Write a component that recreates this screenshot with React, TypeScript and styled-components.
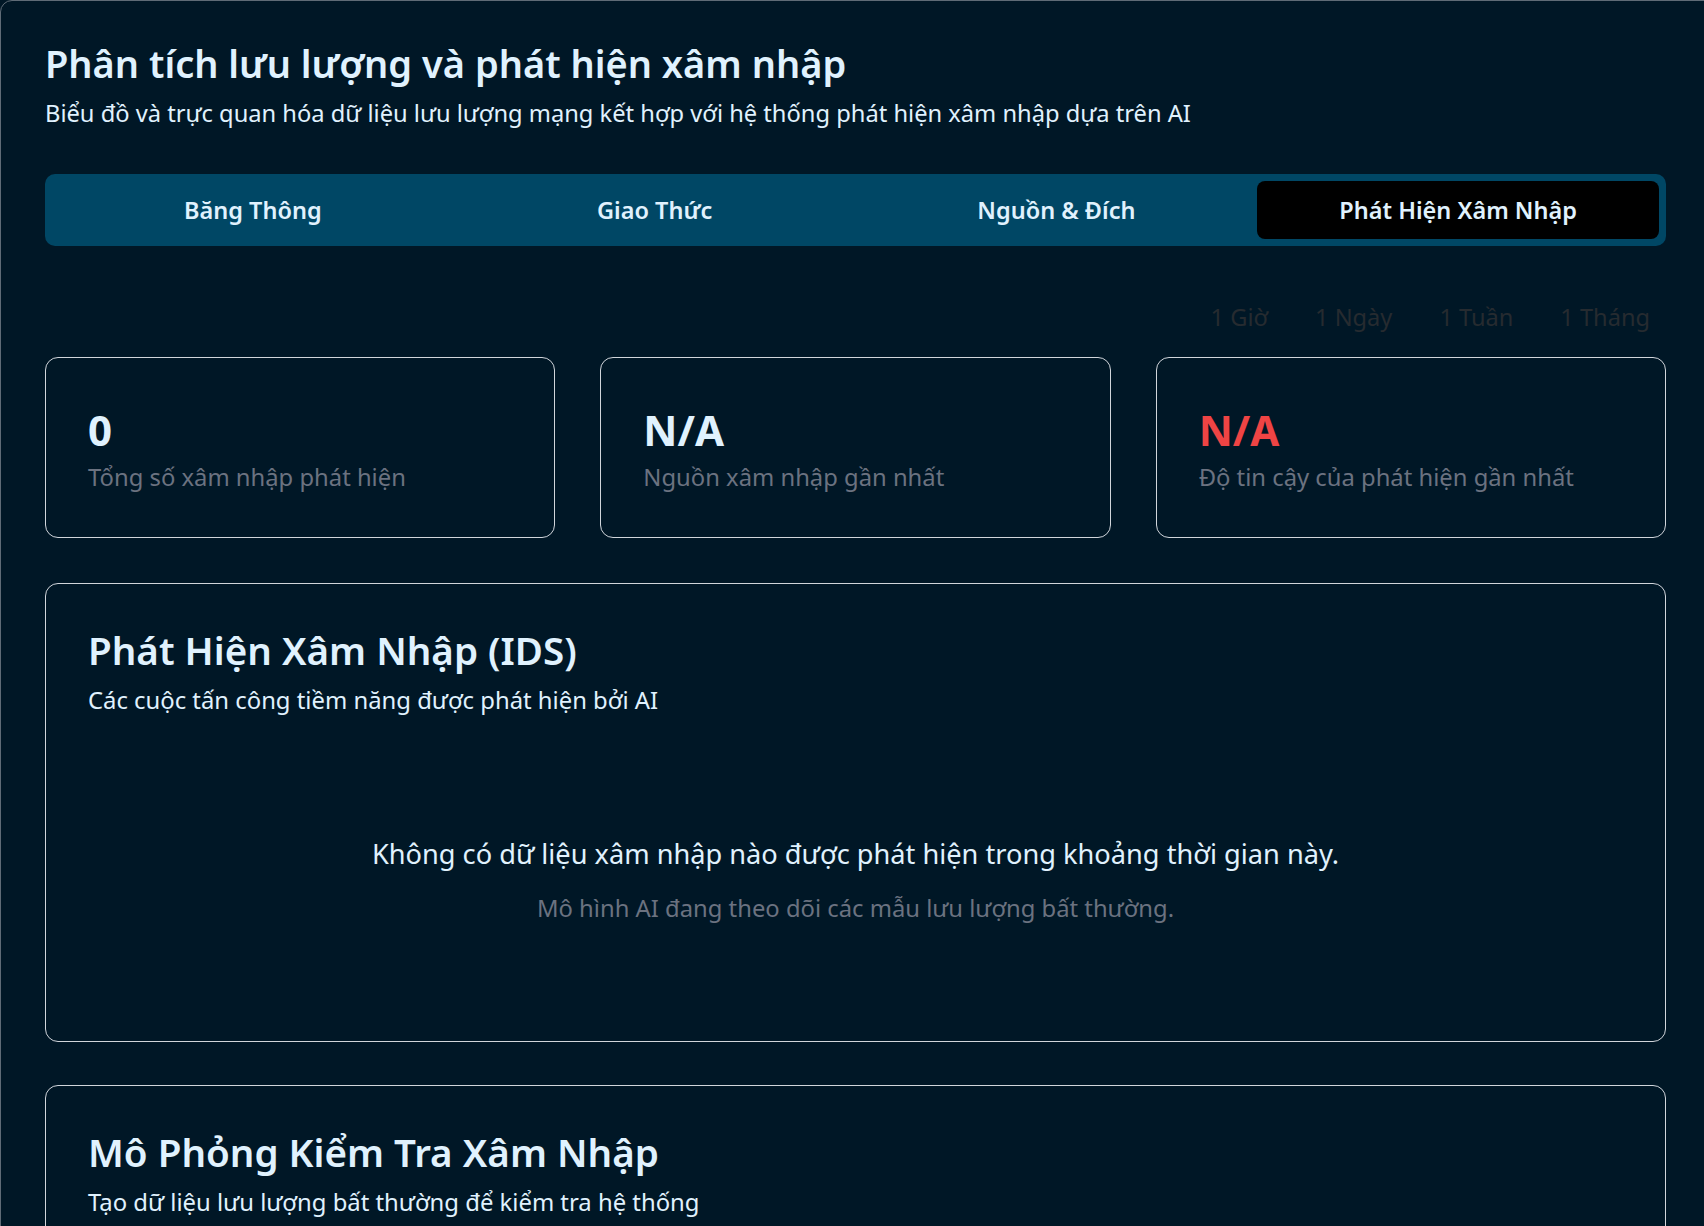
import React, { useState } from "react";
import styled, { createGlobalStyle } from "styled-components";

const GlobalStyle = createGlobalStyle`
  html, body {
    margin: 0;
    padding: 0;
    background: #001726;
  }
  body {
    font-family: "Noto Sans", "Open Sans", sans-serif;
    color: #e0f2fe;
    overflow: hidden;
  }
  * { box-sizing: border-box; }
`;

const Page = styled.div`
  min-height: 1400px;
  width: 1720px;
  background: #001726;
  border: 1px solid #5f6b76;
  border-radius: 12px;
  padding: 40px 0 0 44px;
`;

const Content = styled.div`
  width: 1621px;
`;

const Title = styled.h1`
  margin: 0;
  font-size: 38px;
  line-height: 1.2;
  font-weight: 600;
  color: #e0f2fe;
`;

const Subtitle = styled.p`
  margin: 9px 0 0;
  font-size: 23.7px;
  line-height: 1.5;
  color: #e0f2fe;
`;

const TabBar = styled.div`
  margin-top: 43px;
  display: grid;
  grid-template-columns: repeat(4, 1fr);
  padding: 7px;
  height: 72px;
  background: #004765;
  border-radius: 10px;
`;

const Tab = styled.button<{ $active?: boolean }>`
  border: none;
  border-radius: 8px;
  background: ${(p) => (p.$active ? "#000000" : "transparent")};
  color: #e0f2fe;
  font-family: inherit;
  font-size: 23.5px;
  font-weight: 600;
  cursor: pointer;
`;

const RangeRow = styled.div`
  margin-top: 51px;
  display: flex;
  justify-content: flex-end;
  gap: 15px;
  height: 40px;
`;

const RangeButton = styled.button`
  border: none;
  background: transparent;
  padding: 0 16px;
  font-family: inherit;
  font-size: 23.6px;
  color: #262b30;
  cursor: pointer;
`;

const StatGrid = styled.div`
  margin-top: 20px;
  display: grid;
  grid-template-columns: repeat(3, 1fr);
  gap: 45px;
`;

const StatCard = styled.div`
  height: 181px;
  border: 1px solid #d1d5db;
  border-radius: 13px;
  padding: 47px 42px 0;
`;

const StatValue = styled.div<{ $danger?: boolean }>`
  font-size: 42px;
  line-height: 1.2;
  font-weight: 700;
  color: ${(p) => (p.$danger ? "#ef4444" : "#e0f2fe")};
`;

const StatLabel = styled.div`
  margin-top: 4px;
  font-size: 23.8px;
  line-height: 1.5;
  color: #6b7280;
`;

const Card = styled.section<{ $gap?: number }>`
  margin-top: ${(p) => p.$gap ?? 45}px;
  border: 1px solid #d1d5db;
  border-radius: 13px;
  padding: 43px 42px;
`;

const CardTitle = styled.h2`
  margin: 0;
  font-size: 38.6px;
  line-height: 1.2;
  font-weight: 600;
  color: #e0f2fe;
`;

const CardSubtitle = styled.p`
  margin: 10px 0 0;
  font-size: 23.85px;
  line-height: 1.5;
  color: #e0f2fe;
`;

const EmptyState = styled.div`
  padding: 115px 0 71px;
  text-align: center;
`;

const EmptyMessage = styled.p`
  margin: 0;
  font-size: 27.2px;
  line-height: 1.5;
  color: #e0f2fe;
`;

const EmptyHint = styled.p`
  margin: 16px 0 0;
  font-size: 23.8px;
  line-height: 1.5;
  color: #6b7280;
`;

const SimCard = styled(Card)`
  min-height: 400px;
`;

const tabs = ["Băng Thông", "Giao Thức", "Nguồn & Đích", "Phát Hiện Xâm Nhập"];
const ranges = ["1 Giờ", "1 Ngày", "1 Tuần", "1 Tháng"];

export default function App() {
  const [active, setActive] = useState(3);
  return (
    <>
      <GlobalStyle />
      <Page>
        <Content>
          <Title>Phân tích lưu lượng và phát hiện xâm nhập</Title>
          <Subtitle>
            Biểu đồ và trực quan hóa dữ liệu lưu lượng mạng kết hợp với hệ thống phát hiện xâm nhập dựa trên AI
          </Subtitle>
          <TabBar>
            {tabs.map((t, i) => (
              <Tab key={t} $active={i === active} onClick={() => setActive(i)}>
                {t}
              </Tab>
            ))}
          </TabBar>
          <RangeRow>
            {ranges.map((r) => (
              <RangeButton key={r}>{r}</RangeButton>
            ))}
          </RangeRow>
          <StatGrid>
            <StatCard>
              <StatValue>0</StatValue>
              <StatLabel>Tổng số xâm nhập phát hiện</StatLabel>
            </StatCard>
            <StatCard>
              <StatValue>N/A</StatValue>
              <StatLabel>Nguồn xâm nhập gần nhất</StatLabel>
            </StatCard>
            <StatCard>
              <StatValue $danger>N/A</StatValue>
              <StatLabel>Độ tin cậy của phát hiện gần nhất</StatLabel>
            </StatCard>
          </StatGrid>
          <Card>
            <CardTitle>Phát Hiện Xâm Nhập (IDS)</CardTitle>
            <CardSubtitle>Các cuộc tấn công tiềm năng được phát hiện bởi AI</CardSubtitle>
            <EmptyState>
              <EmptyMessage>
                Không có dữ liệu xâm nhập nào được phát hiện trong khoảng thời gian này.
              </EmptyMessage>
              <EmptyHint>Mô hình AI đang theo dõi các mẫu lưu lượng bất thường.</EmptyHint>
            </EmptyState>
          </Card>
          <SimCard $gap={43}>
            <CardTitle>Mô Phỏng Kiểm Tra Xâm Nhập</CardTitle>
            <CardSubtitle>Tạo dữ liệu lưu lượng bất thường để kiểm tra hệ thống</CardSubtitle>
          </SimCard>
        </Content>
      </Page>
    </>
  );
}
